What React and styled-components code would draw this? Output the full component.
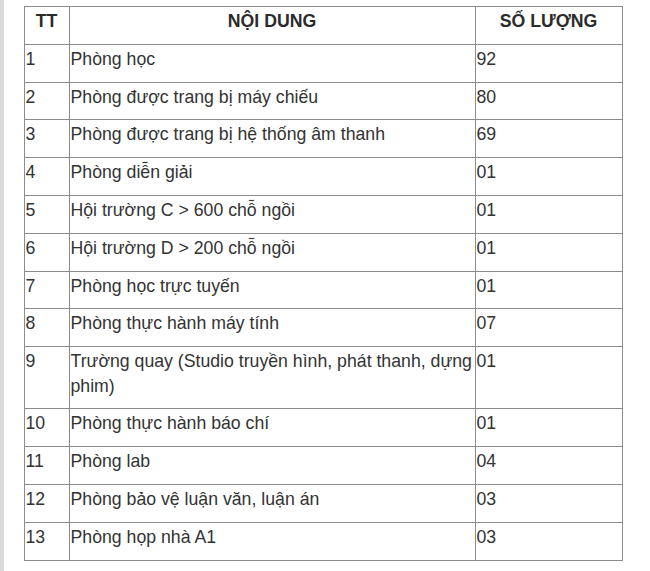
import styled, { createGlobalStyle } from "styled-components";

const GlobalStyle = createGlobalStyle`
  html, body {
    margin: 0;
    padding: 0;
    background: #ffffff;
  }
  body {
    font-family: "Liberation Sans", Arial, sans-serif;
  }
`;

const Page = styled.div`
  display: flex;
  width: 650px;
  height: 571px;
  overflow: hidden;
  background: #ffffff;
`;

const SideStrip = styled.div`
  width: 4px;
  flex: 0 0 4px;
  background: #d9d9d9;
`;

const Content = styled.div`
  padding: 6px 0 0 19.5px;
`;

const Table = styled.table`
  border-collapse: collapse;
  width: 598px;
  table-layout: fixed;
  color: #333333;
  font-size: 17.7px;
  line-height: 24.5px;
`;

const Col = styled.col`
  width: ${({ w }) => w}px;
`;

const HeadCell = styled.th`
  border: 1px solid #8c8c8c;
  padding: 2px 2px 10.3px;
  font-weight: bold;
  text-align: center;
  vertical-align: top;
  color: #2b2b2b;
`;

const Cell = styled.td`
  border: 1px solid #8c8c8c;
  padding: 2px 0 10.3px 1px;
  vertical-align: top;
  text-align: left;
`;

const rows = [
  ["1", "Phòng học", "92"],
  ["2", "Phòng được trang bị máy chiếu", "80"],
  ["3", "Phòng được trang bị hệ thống âm thanh", "69"],
  ["4", "Phòng diễn giải", "01"],
  ["5", "Hội trường C > 600 chỗ ngồi", "01"],
  ["6", "Hội trường D > 200 chỗ ngồi", "01"],
  ["7", "Phòng học trực tuyến", "01"],
  ["8", "Phòng thực hành máy tính", "07"],
  ["9", "Trường quay (Studio truyền hình, phát thanh, dựng phim)", "01"],
  ["10", "Phòng thực hành báo chí", "01"],
  ["11", "Phòng lab", "04"],
  ["12", "Phòng bảo vệ luận văn, luận án", "03"],
  ["13", "Phòng họp nhà A1", "03"],
];

export default function App() {
  return (
    <>
      <GlobalStyle />
      <Page>
        <SideStrip />
        <Content>
          <Table>
            <colgroup>
              <Col w={45} />
              <Col w={406} />
              <Col w={147} />
            </colgroup>
            <thead>
              <tr>
                <HeadCell>TT</HeadCell>
                <HeadCell>NỘI DUNG</HeadCell>
                <HeadCell>SỐ LƯỢNG</HeadCell>
              </tr>
            </thead>
            <tbody>
              {rows.map(([no, name, qty]) => (
                <tr key={no}>
                  <Cell>{no}</Cell>
                  <Cell>{name}</Cell>
                  <Cell>{qty}</Cell>
                </tr>
              ))}
            </tbody>
          </Table>
        </Content>
      </Page>
    </>
  );
}
